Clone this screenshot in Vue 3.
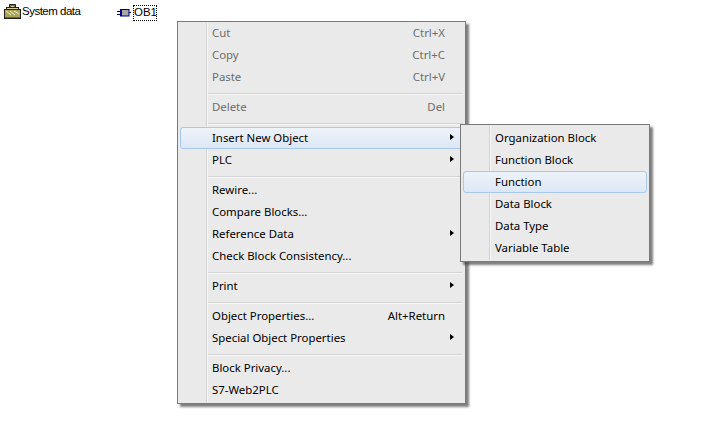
<script setup>
const menu = [
  [{ t: 'Cut', k: 'Ctrl+X', d: 1 }, { t: 'Copy', k: 'Ctrl+C', d: 1 }, { t: 'Paste', k: 'Ctrl+V', d: 1 }],
  [{ t: 'Delete', k: 'Del', d: 1 }],
  [{ t: 'Insert New Object', a: 1, h: 1 }, { t: 'PLC', a: 1 }],
  [{ t: 'Rewire...' }, { t: 'Compare Blocks...' }, { t: 'Reference Data', a: 1 }, { t: 'Check Block Consistency...' }],
  [{ t: 'Print', a: 1 }],
  [{ t: 'Object Properties...', k: 'Alt+Return' }, { t: 'Special Object Properties', a: 1 }],
  [{ t: 'Block Privacy...' }, { t: 'S7-Web2PLC' }],
]
const sub = [
  { t: 'Organization Block' }, { t: 'Function Block' }, { t: 'Function', h: 1 },
  { t: 'Data Block' }, { t: 'Data Type' }, { t: 'Variable Table' },
]
</script>

<template>
  <div class="page">
    <div class="tree">
      <div class="node first">
        <svg width="18" height="16" viewBox="0 0 18 16">
          <path d="M5.5 5 V1.5 H11.5 V5" fill="#77733f" stroke="#222" />
          <rect x="7" y="3" width="3" height="2" fill="#d0d0b0" />
          <rect x="2.5" y="4.5" width="12" height="3" fill="#d8d48a" stroke="#222" />
          <rect x="0.5" y="6.5" width="16" height="9" fill="#aaa455" stroke="#222" />
          <path d="M2 8 L7 12 M6 8 L11 12 M10 8 L15 11" stroke="#f4f4dc" />
          <path d="M1 14.5 H16" stroke="#6c6830" />
        </svg>
        <span class="sys">System data</span>
      </div>
      <div class="node">
        <svg width="16" height="16" viewBox="0 0 16 16">
          <path d="M1 8.5 H5 M1 11.5 H5 M13 9.5 H15" stroke="#000080" />
          <rect x="4" y="6" width="9.5" height="7.5" fill="#000080" />
          <rect x="6" y="7" width="6.5" height="5.5" fill="#a8a8a8" />
        </svg>
        <span class="focus">OB1</span>
      </div>
    </div>

    <div class="menu main">
      <div class="rail"></div>
      <template v-for="(group, i) in menu" :key="i">
        <div v-if="i" class="sep" :class="{ wide: i === 2 }"></div>
        <div v-for="item in group" :key="item.t" class="item" :class="{ dis: item.d, hot: item.h }">
          <span class="label">{{ item.t }}</span>
          <span v-if="item.k" class="key">{{ item.k }}</span>
          <span v-if="item.a" class="arrow"></span>
        </div>
      </template>
    </div>

    <div class="menu submenu">
      <div class="rail"></div>
      <div v-for="item in sub" :key="item.t" class="item" :class="{ hot: item.h }">
        <span class="label">{{ item.t }}</span>
      </div>
    </div>
  </div>
</template>

<style>
html, body { margin: 0; background: #fff; }
</style>

<style scoped>
.page {
  position: relative;
  width: 709px;
  height: 421px;
  overflow: hidden;
  background: #fff;
  font-family: "Noto Sans", sans-serif;
  font-size: 11.4px;
  color: #000;
}
.tree {
  display: flex;
  padding: 3px 0 0 4px;
  font-family: "Liberation Sans", sans-serif;
  font-size: 11.5px;
}
.node { display: flex; align-items: center; height: 16px; }
.node.first { width: 112px; }
.sys { letter-spacing: -0.5px; }
.focus {
  outline: 1px dotted #000;
  outline-offset: -1px;
  padding: 0 3px 0 1px;
  margin-left: 1px;
  margin-top: 4px;
  height: 16px;
  line-height: 15px;
  width: 20px;
}
.menu {
  position: absolute;
  box-sizing: border-box;
  background: #eaeaea;
  border: 1px solid #7a7a7a;
  box-shadow: 3px 3px 2px rgba(60, 60, 60, .65);
  padding: 0 2px 2px;
}
.main { left: 177px; top: 21px; width: 289px; height: 383px; }
.submenu { left: 460px; top: 124px; width: 190px; height: 138px; padding-top: 2px; }
.rail {
  position: absolute;
  top: 1px;
  bottom: 1px;
  left: 28px;
  width: 1px;
  background: #d4d4d4;
  box-shadow: 1px 0 0 #f6f6f6;
}
.item {
  position: relative;
  box-sizing: border-box;
  display: flex;
  align-items: center;
  height: 22px;
  padding-left: 31px;
  padding-bottom: 2px;
  border: 1px solid transparent;
  border-radius: 3px;
}
.hot {
  border-color: #a8c8f0;
  background: linear-gradient(#eef3fa, #dce7f5);
}
.dis { color: #6d6d6d; }
.label { flex: 1; }
.key { margin-right: 17px; }
.arrow {
  position: absolute;
  right: 8px;
  top: 6px;
  width: 0;
  height: 0;
  border-left: 4px solid #000;
  border-top: 3.5px solid transparent;
  border-bottom: 3.5px solid transparent;
}
.sep {
  position: relative;
  margin: 5px 0 2px 28px;
  height: 1px;
  background: #d4d4d4;
  box-shadow: 0 1px 0 #f6f6f6;
}
.sep.wide { margin-bottom: 3px; }
</style>
